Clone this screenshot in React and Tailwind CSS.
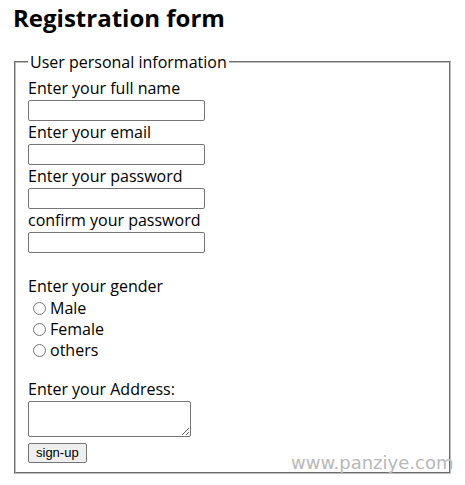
export default function App() {
  const font = { fontFamily: '"Open Sans", "Noto Sans", sans-serif' };
  const input = "block w-[177px] h-[21px] border border-[#767676] rounded-[2px] bg-white";
  return (
    <div className="relative w-[465px] h-[485px] bg-white text-black text-[16px] leading-[23px]" style={font}>
      <h2 className="pl-[13px] pt-[3px] text-[24px] leading-[30px] font-bold">Registration form</h2>
      <div className="px-[14px] mt-[19px]">
        <fieldset className="border-2 [border-style:groove] border-[#c0c0c0] px-[12px] pt-[5px] pb-[9px]">
          <legend className="px-[2px] leading-[20px]">User personal information</legend>
          <div className="flex flex-col">
            <label>Enter your full name</label>
            <input className={input} />
            <label>Enter your email</label>
            <input className={input} />
            <label>Enter your password</label>
            <input className={input} type="password" />
            <label>confirm your password</label>
            <input className={input} type="password" />
            <div className="h-[22px]" />
            <label>Enter your gender</label>
            {["Male", "Female", "others"].map((g) => (
              <div key={g} className="flex items-center h-[21px]">
                <input type="radio" name="g" className="ml-[5px] mr-[4px] w-[13px] h-[13px] m-0" />
                <span>{g}</span>
              </div>
            ))}
            <div className="h-[17px]" />
            <label>Enter your Address:</label>
            <textarea className="block w-[163px] h-[36px] border border-[#767676] rounded-[2px] resize" />
            <div className="flex mt-[6px]">
              <button className="h-[20px] px-[7px] text-[13px] leading-[16px] border border-[#767676] rounded-[2px] bg-[#efefef]" style={{ fontFamily: '"Liberation Sans", Arial, sans-serif' }}>sign-up</button>
            </div>
          </div>
        </fieldset>
      </div>
      <div className="absolute left-[291px] top-[451px] text-[18px] text-[#b8b8b8]" style={{ fontFamily: '"DejaVu Sans", Verdana, sans-serif' }}>www.panziye.com</div>
    </div>
  );
}
